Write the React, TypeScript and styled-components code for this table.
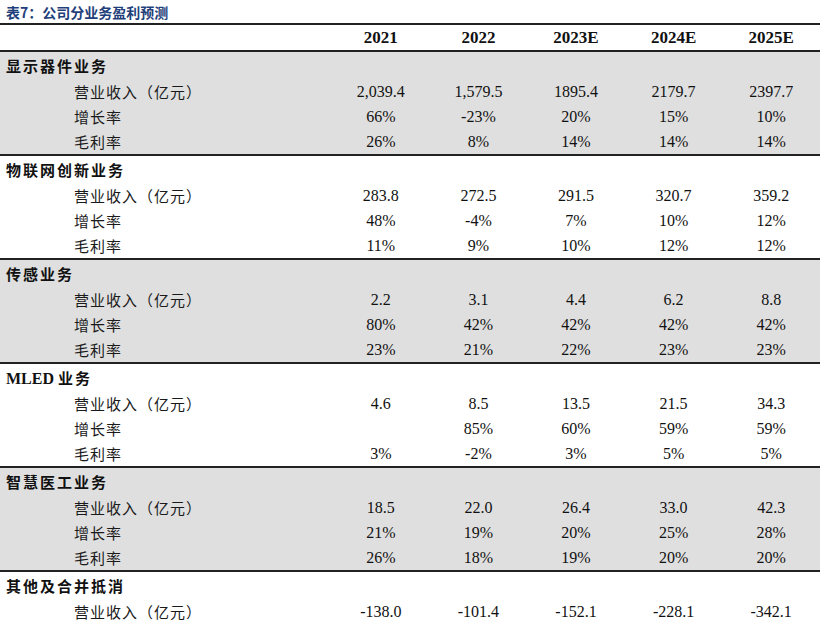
import { createGlobalStyle } from 'styled-components';
import styled from 'styled-components';

const GlobalStyle = createGlobalStyle`
  html, body {
    margin: 0;
    padding: 0;
    background: #ffffff;
  }
  body {
    font-family: 'Liberation Serif', 'Noto Sans CJK SC', serif;
    color: #111111;
  }
`;

const Page = styled.div`
  width: 820px;
  display: flex;
  flex-direction: column;
`;

const Title = styled.div`
  height: 23px;
  padding-left: 6px;
  display: flex;
  align-items: center;
  font-family: 'Noto Sans CJK SC', sans-serif;
  font-weight: 700;
  font-size: 14px;
  color: #1f3f7a;
  line-height: 1;
`;

const Table = styled.div`
  display: flex;
  flex-direction: column;
  border-top: 2px solid #222222;
`;

const Row = styled.div<{ $height: number }>`
  display: grid;
  grid-template-columns: 332px repeat(5, 1fr);
  height: ${(p) => p.$height}px;
  align-items: center;
`;

const HeaderRow = styled(Row)`
  border-bottom: 2px solid #222222;
`;

const Section = styled.div<{ $shaded: boolean }>`
  display: flex;
  flex-direction: column;
  background: ${(p) => (p.$shaded ? '#dfdfdf' : '#ffffff')};
  border-bottom: 2px solid #222222;
`;

const YearCell = styled.div`
  text-align: center;
  font-family: 'Liberation Serif', serif;
  font-weight: 700;
  font-size: 17px;
  color: #111111;
`;

const SectionName = styled.div`
  padding-left: 6px;
  font-family: 'Noto Sans CJK SC', sans-serif;
  font-weight: 700;
  font-size: 15px;
  letter-spacing: 2px;
  color: #111111;
  white-space: nowrap;
`;

const Latin = styled.span`
  font-family: 'Liberation Serif', serif;
  font-size: 16px;
  letter-spacing: 0;
  margin-right: 4px;
`;

const ItemName = styled.div`
  padding-left: 74px;
  font-family: 'Noto Sans CJK SC', sans-serif;
  font-size: 15px;
  letter-spacing: 1px;
  color: #1a1a1a;
  white-space: nowrap;
`;

const NumCell = styled.div`
  text-align: center;
  font-family: 'Liberation Serif', serif;
  font-size: 16px;
  color: #111111;
`;

type Item = { label: string; values: string[] };
type Block = { prefix?: string; name: string; shaded: boolean; items: Item[] };

const YEARS = ['2021', '2022', '2023E', '2024E', '2025E'];

const REV = '营业收入（亿元）';
const GROWTH = '增长率';
const MARGIN = '毛利率';

const BLOCKS: Block[] = [
  {
    name: '显示器件业务',
    shaded: true,
    items: [
      { label: REV, values: ['2,039.4', '1,579.5', '1895.4', '2179.7', '2397.7'] },
      { label: GROWTH, values: ['66%', '-23%', '20%', '15%', '10%'] },
      { label: MARGIN, values: ['26%', '8%', '14%', '14%', '14%'] },
    ],
  },
  {
    name: '物联网创新业务',
    shaded: false,
    items: [
      { label: REV, values: ['283.8', '272.5', '291.5', '320.7', '359.2'] },
      { label: GROWTH, values: ['48%', '-4%', '7%', '10%', '12%'] },
      { label: MARGIN, values: ['11%', '9%', '10%', '12%', '12%'] },
    ],
  },
  {
    name: '传感业务',
    shaded: true,
    items: [
      { label: REV, values: ['2.2', '3.1', '4.4', '6.2', '8.8'] },
      { label: GROWTH, values: ['80%', '42%', '42%', '42%', '42%'] },
      { label: MARGIN, values: ['23%', '21%', '22%', '23%', '23%'] },
    ],
  },
  {
    prefix: 'MLED',
    name: '业务',
    shaded: false,
    items: [
      { label: REV, values: ['4.6', '8.5', '13.5', '21.5', '34.3'] },
      { label: GROWTH, values: ['', '85%', '60%', '59%', '59%'] },
      { label: MARGIN, values: ['3%', '-2%', '3%', '5%', '5%'] },
    ],
  },
  {
    name: '智慧医工业务',
    shaded: true,
    items: [
      { label: REV, values: ['18.5', '22.0', '26.4', '33.0', '42.3'] },
      { label: GROWTH, values: ['21%', '19%', '20%', '25%', '28%'] },
      { label: MARGIN, values: ['26%', '18%', '19%', '20%', '20%'] },
    ],
  },
  {
    name: '其他及合并抵消',
    shaded: false,
    items: [
      { label: REV, values: ['-138.0', '-101.4', '-152.1', '-228.1', '-342.1'] },
    ],
  },
];

export default function App(): JSX.Element {
  return (
    <Page>
      <GlobalStyle />
      <Title>表7：公司分业务盈利预测</Title>
      <Table>
        <HeaderRow $height={25}>
          <div />
          {YEARS.map((y) => (
            <YearCell key={y}>{y}</YearCell>
          ))}
        </HeaderRow>
        {BLOCKS.map((block) => (
          <Section key={block.name + (block.prefix ?? '')} $shaded={block.shaded}>
            <Row $height={27}>
              <SectionName>
                {block.prefix && <Latin>{block.prefix}</Latin>}
                {block.name}
              </SectionName>
            </Row>
            {block.items.map((item) => (
              <Row key={item.label} $height={25}>
                <ItemName>{item.label}</ItemName>
                {item.values.map((v, i) => (
                  <NumCell key={i}>{v}</NumCell>
                ))}
              </Row>
            ))}
          </Section>
        ))}
      </Table>
    </Page>
  );
}
